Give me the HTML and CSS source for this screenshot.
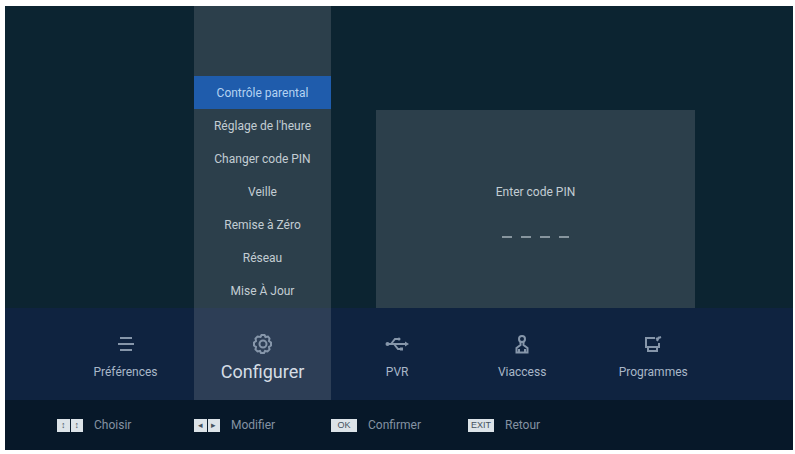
FILE: index.html
```html
<!DOCTYPE html>
<html lang="fr">
<head>
  <meta charset="UTF-8">
  <meta name="viewport" content="width=device-width, initial-scale=1.0">
  <title>Configurer</title>
  <link rel="stylesheet" href="styles.css">
</head>
<body>
  <div class="screen">
    <main class="content">
      <div class="submenu">
        <button type="button" class="submenu-item selected">Contrôle parental</button>
        <button type="button" class="submenu-item">Réglage de l'heure</button>
        <button type="button" class="submenu-item">Changer code PIN</button>
        <button type="button" class="submenu-item">Veille</button>
        <button type="button" class="submenu-item">Remise à Zéro</button>
        <button type="button" class="submenu-item">Réseau</button>
        <button type="button" class="submenu-item">Mise À Jour</button>
      </div>

      <form class="pin-panel">
        <label class="pin-label" for="pin1">Enter code PIN</label>
        <div class="pin-digits">
          <input id="pin1" class="pin-digit" type="password" maxlength="1" aria-label="Enter code PIN">
          <input class="pin-digit" type="password" maxlength="1" aria-label="2">
          <input class="pin-digit" type="password" maxlength="1" aria-label="3">
          <input class="pin-digit" type="password" maxlength="1" aria-label="4">
        </div>
      </form>
    </main>

    <nav class="navbar">
      <a class="nav-item" href="#">
        <svg class="nav-icon" viewBox="0 0 24 20">
          <path d="M6 4h12M4 10h16M6 16h12"/>
        </svg>
        <span class="nav-text">Préférences</span>
      </a>
      <a class="nav-item active" href="#">
        <svg class="nav-icon" viewBox="0 0 24 20">
          <path d="M9.5 3l1-2h3l1 2 2.500-.5 1.500 2-.5 2.500 2 1.500v3l-2 1.500.5 2.500-2 2-2.500-.5-1 2h-3l-1-2-2.500.5-2-2 .5-2.500-2-1.500v-3l2-1.500-.5-2.500 2-2z"/>
          <circle cx="12" cy="10" r="3.500"/>
        </svg>
        <span class="nav-text">Configurer</span>
      </a>
      <a class="nav-item" href="#">
        <svg class="nav-icon" viewBox="0 0 24 20">
          <path d="M2 10h20M6 10l4-5h4M9 10l4 5h3"/>
          <circle class="solid" cx="2.500" cy="10" r="2"/>
          <circle class="solid" cx="14" cy="5" r="1.500"/>
          <path class="solid" d="M20 7.500l4 2.500-4 2.500zM15 13.500h3v3h-3z"/>
        </svg>
        <span class="nav-text">PVR</span>
      </a>
      <a class="nav-item" href="#">
        <svg class="nav-icon" viewBox="0 0 24 20">
          <circle cx="12" cy="5" r="3"/>
          <path d="M10.500 8v3l-4 3v4.500h11V14l-4-3V8M9 18v-3M15 18v-3"/>
        </svg>
        <span class="nav-text">Viaccess</span>
      </a>
      <a class="nav-item" href="#">
        <svg class="nav-icon" viewBox="0 0 24 20">
          <path d="M14 4H5v9h2v4h9v-4h2V9M8 13h8M15 5l5-2M16 7l2-4"/>
        </svg>
        <span class="nav-text">Programmes</span>
      </a>
    </nav>

    <footer class="hints">
      <div class="hint">
        <span class="keys"><kbd>↕</kbd><kbd>↕</kbd></span>
        <span>Choisir</span>
      </div>
      <div class="hint">
        <span class="keys"><kbd>◂</kbd><kbd>▸</kbd></span>
        <span>Modifier</span>
      </div>
      <div class="hint">
        <span class="keys"><kbd>OK</kbd></span>
        <span>Confirmer</span>
      </div>
      <div class="hint">
        <span class="keys"><kbd>EXIT</kbd></span>
        <span>Retour</span>
      </div>
    </footer>
  </div>
</body>
</html>
```

FILE: styles.css
```css
* {
  box-sizing: border-box;
}

body {
  margin: 0;
  background-color: #fff;
  font-family: "Liberation Sans Narrow", Roboto, Arial, sans-serif;
  font-size: 12px;
  line-height: 16px;
  color: #c3cdd3;
}

.screen {
  display: flex;
  flex-direction: column;
  min-height: calc(100vh - 10px);
  margin: 6px 2px 4px 5px;
  background-color: #0c2431;
}

/* submenu and dialog, both sit on top of the navbar */
.content {
  flex: 1;
  display: grid;
  grid-template-columns: 189fr 137fr 45fr 319fr 98fr;
}

.submenu {
  grid-column: 2;
  display: flex;
  flex-direction: column;
  padding-top: 70px;
  background-color: #2c3f4b;
}

.submenu-item {
  height: 33px;
  padding: 0;
  border: 0;
  background: none;
  font: inherit;
  color: inherit;
  text-align: center;
}

.submenu-item.selected {
  background-color: #1f5cac;
  color: #b4d3f2;
}

.pin-panel {
  grid-column: 4;
  display: flex;
  flex-direction: column;
  align-items: center;
  margin-top: 104px;
  padding-top: 74px;
  background-color: #2c3f4b;
}

.pin-digits {
  display: flex;
  gap: 9px;
  margin-top: 20px;
}

.pin-digit {
  width: 10px;
  height: 18px;
  padding: 0;
  border: 0;
  border-bottom: 2px solid #87959e;
  border-radius: 0;
  background: none;
  color: inherit;
  text-align: center;
}

.navbar {
  display: grid;
  grid-template-columns: 137fr 137fr 132fr 118fr 144fr;
  height: 92px;
  padding: 0 8.6% 0 6.6%;
  background-color: #0f2340;
}

.nav-item {
  display: flex;
  flex-direction: column;
  align-items: center;
  padding-top: 26px;
  color: #a9b7c8;
  text-decoration: none;
}

.nav-item.active {
  background-color: #2d3e56;
  color: #d5dde5;
  font-size: 18px;
}

.nav-icon {
  width: 24px;
  height: 20px;
  margin-bottom: 10px;
  fill: none;
  stroke: #8696aa;
  stroke-width: 2;
}

.nav-icon .solid {
  fill: #8696aa;
  stroke: none;
}

.hints {
  display: grid;
  grid-template-columns: repeat(4, 137fr) 188fr;
  height: 50px;
  padding-left: 6.6%;
  background-color: #071829;
  color: #8492a2;
}

.hint {
  display: flex;
  align-items: center;
  gap: 11px;
}

.keys {
  display: flex;
  gap: 1px;
  width: 26px;
}

kbd {
  flex: 1;
  height: 13px;
  background-color: #dce3e8;
  font-family: "Liberation Sans", Arial, sans-serif;
  font-size: 9px;
  line-height: 13px;
  text-align: center;
  color: #45525e;
}
```
